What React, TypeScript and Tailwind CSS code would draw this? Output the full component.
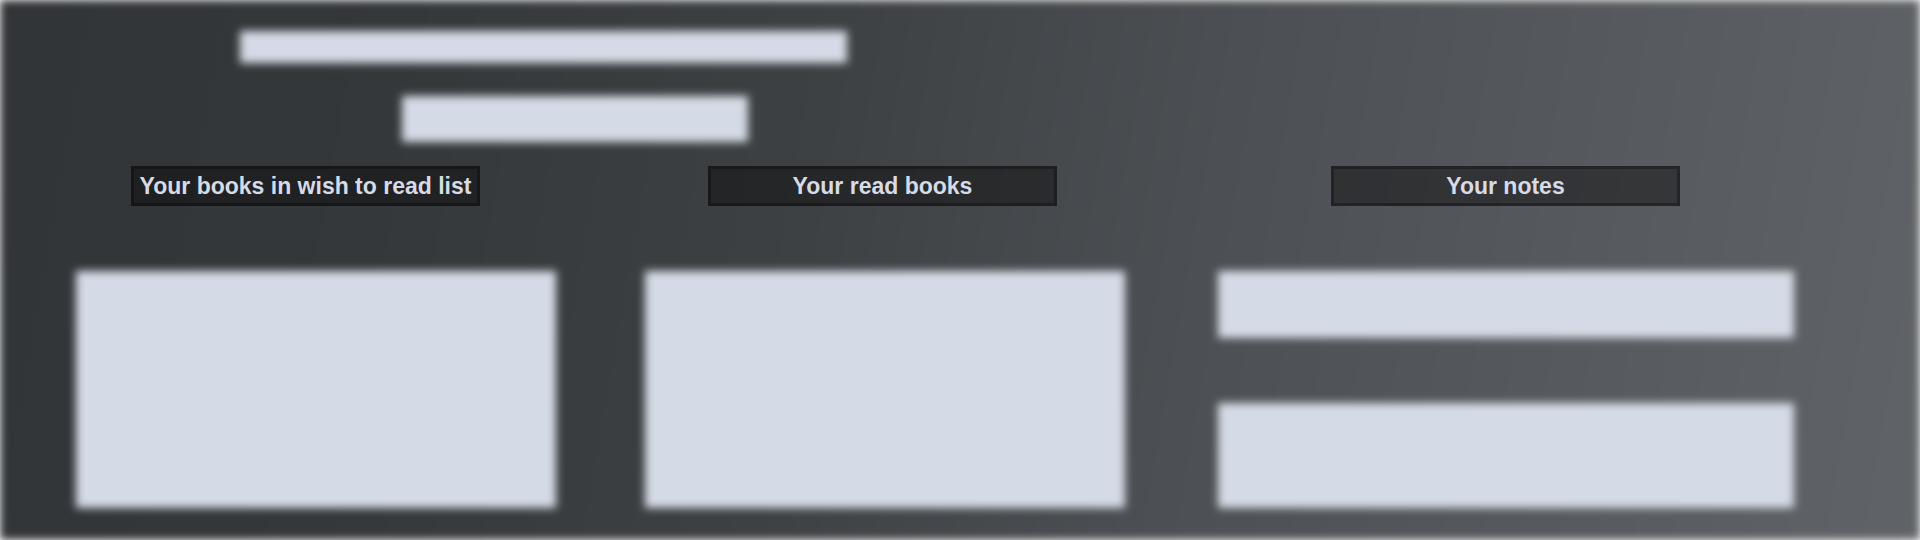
import React from 'react'

const labels = [
  { title: 'Your books in wish to read list', className: 'ml-[131px]' },
  { title: 'Your read books', className: 'ml-[228px]' },
  { title: 'Your notes', className: 'ml-[274px]' },
]

function Placeholder({ className }: { className: string }) {
  return <div className={`bg-[#d5dbe6] ${className}`} />
}

export default function App() {
  return (
    <div className="grid h-[540px] w-full grid-cols-1 grid-rows-1 overflow-hidden bg-white">
      {/* blurred preview of the page behind the labels */}
      <div className="col-start-1 row-start-1 flex flex-col bg-[linear-gradient(100deg,#323538_0%,#35383b_20%,#3e4144_42%,#4c4f53_62%,#606367_100%)] blur-[4px]">
        <Placeholder className="ml-[240px] mt-[31px] h-[32px] w-[607px]" />
        <Placeholder className="ml-[402px] mt-[33px] h-[46px] w-[346px]" />

        <div className="ml-[76px] mt-[129px] flex">
          <Placeholder className="h-[237px] w-[480px]" />
          <Placeholder className="ml-[89px] h-[237px] w-[480px]" />
          <div className="ml-[93px] flex w-[576px] flex-col">
            <Placeholder className="h-[67px]" />
            <Placeholder className="mt-[65px] h-[105px]" />
          </div>
        </div>
      </div>

      {/* section headings */}
      <div className="relative z-10 col-start-1 row-start-1 flex items-start pt-[166px]">
        {labels.map((l) => (
          <div
            key={l.title}
            className={`${l.className} flex h-[40px] w-[349px] items-center justify-center border-[3px] border-black/30 bg-black/40 font-['Liberation_Sans',Arial,sans-serif] text-[23px] font-bold leading-none text-[#d6dbe7]`}
          >
            {l.title}
          </div>
        ))}
      </div>
    </div>
  )
}
